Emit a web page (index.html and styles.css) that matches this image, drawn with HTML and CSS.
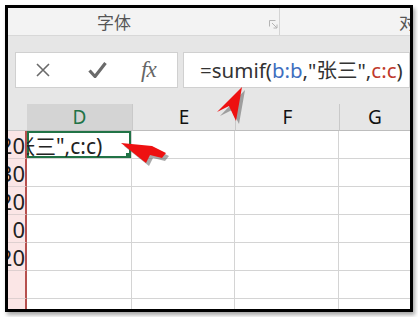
FILE: index.html
```html
<!DOCTYPE html>
<html>
<head>
  <title>sumif</title>
  <link rel="stylesheet" href="styles.css">
</head>
<body>
  <div class="frame">
    <div class="ribbon">
      <div class="group font-group">
        <span class="group-label">字体</span>
        <svg class="launcher" width="10" height="9" viewBox="0 0 10 9">
          <path d="M0.5 0.5h6M0.5 0.5v6" stroke="#b4b4b4" fill="none"/>
          <path d="M3 3l5 5M8 4.5V8H4.5" stroke="#b4b4b4" fill="none"/>
        </svg>
      </div>
      <div class="group align-group">对齐方式</div>
    </div>

    <div class="formula-area">
      <div class="fbuttons">
        <svg class="ficon" width="16" height="14" viewBox="0 0 16 14">
          <path d="M2 1l12 12M14 1L2 13" stroke="#6a6a6a" stroke-width="1.6" fill="none"/>
        </svg>
        <svg class="ficon" width="19" height="16" viewBox="0 0 19 16">
          <path d="M1.5 8.5l5.5 6L17.5 1" stroke="#6a6a6a" stroke-width="3.2" fill="none" stroke-linejoin="round"/>
        </svg>
        <span class="fx">fx</span>
      </div>
      <div class="fbox">=sumif(<span class="ref-b">b:b</span>,"张三",<span class="ref-c">c:c</span>)</div>
    </div>

    <div class="sheet">
      <div class="corner"></div>
      <div class="colhead active">D</div>
      <div class="colhead">E</div>
      <div class="colhead">F</div>
      <div class="colhead">G</div>

      <div class="rowhead"><span>120</span></div>
      <div class="cell selected"><span class="edit">张三",c:c)</span></div>
      <div class="cell"></div><div class="cell"></div><div class="cell last"></div>

      <div class="rowhead"><span>130</span></div>
      <div class="cell"></div><div class="cell"></div><div class="cell"></div><div class="cell last"></div>

      <div class="rowhead"><span>120</span></div>
      <div class="cell"></div><div class="cell"></div><div class="cell"></div><div class="cell last"></div>

      <div class="rowhead"><span>210</span></div>
      <div class="cell"></div><div class="cell"></div><div class="cell"></div><div class="cell last"></div>

      <div class="rowhead"><span>120</span></div>
      <div class="cell"></div><div class="cell"></div><div class="cell"></div><div class="cell last"></div>

      <div class="rowhead"><span></span></div>
      <div class="cell"></div><div class="cell"></div><div class="cell"></div><div class="cell last"></div>

      <div class="rowhead"><span></span></div>
      <div class="cell"></div><div class="cell"></div><div class="cell"></div><div class="cell last"></div>
    </div>

    <!-- red pointer arrows drawn over the screenshot -->
    <svg class="arrows" width="402" height="301" viewBox="8 8 402 301">
      <polygon points="245,90 220,116 232,110 239,124" fill="#555" opacity="0.5"/>
      <polygon points="242,87 217,112 229,106 236,121" fill="#ee1111"/>
      <polygon points="124,146 155,149 169,156 165,161 153,158 149,166" fill="#555" opacity="0.5"/>
      <polygon points="121,143 152,146 166,153 162,158 150,155 146,163" fill="#ee1111"/>
    </svg>
  </div>
</body>
</html>
```

FILE: styles.css
```css
body {
  margin: 0;
  background: #fff;
  font-family: "Noto Sans", "Noto Sans CJK SC", sans-serif;
}

.frame {
  position: relative;
  margin: 5px;
  width: 402px;
  height: 301px;
  border: 3px solid #000;
  overflow: hidden;
  box-shadow: 2px 3px 4px rgba(0, 0, 0, 0.35);
  background: #e6e6e6;
}

/* ribbon group labels */
.ribbon {
  display: flex;
  height: 27px;
  background: #f3f3f3;
  border-bottom: 1px solid #d8d8d8;
}
.group {
  display: flex;
  align-items: center;
  color: #555;
  font-size: 17px;
  white-space: nowrap;
}
.font-group {
  width: 279px;
  border-right: 1px solid #d4d4d4;
}
.group-label {
  margin-left: 89px;
}
.launcher {
  margin-left: 138px;
  margin-top: 5px;
}
.align-group {
  padding-left: 119px;
  overflow: hidden;
}

/* formula bar */
.formula-area {
  display: flex;
  gap: 5px;
  height: 68px;
  padding: 16px 0 0 7px;
  box-sizing: border-box;
  background: #e6e6e6;
}
.fbuttons {
  display: flex;
  align-items: center;
  width: 161px;
  height: 34px;
  background: #fff;
  border: 1px solid #d0d0d0;
}
.fbuttons .ficon:first-child {
  margin-left: 19px;
}
.fbuttons .ficon:nth-child(2) {
  margin-left: 37px;
}
.fx {
  margin-left: 34px;
  font-family: "Liberation Serif", serif;
  font-style: italic;
  font-size: 23px;
  color: #666;
  letter-spacing: -1px;
}
.fbox {
  flex: 1;
  height: 34px;
  background: #fff;
  border: 1px solid #d0d0d0;
  padding-left: 16px;
  font-size: 20.5px;
  line-height: 34px;
  color: #333;
  white-space: nowrap;
}
.ref-b { color: #3f6fc0; }
.ref-c { color: #c0392b; }

/* worksheet grid */
.sheet {
  display: grid;
  grid-template-columns: 19px 105px 103px 104px 71px;
  grid-template-rows: 27px repeat(7, 28px);
  background: #fff;
}
.corner {
  background: #e6e6e6;
  border-bottom: 1px solid #c6c6c6;
}
.colhead {
  display: flex;
  align-items: center;
  justify-content: center;
  background: #e6e6e6;
  border-left: 1px solid #c9c9c9;
  border-bottom: 1px solid #bdbdbd;
  font-size: 19px;
  color: #111;
}
.colhead.active {
  background: #d4d4d4;
  color: #217346;
  border-left: none;
}
.rowhead {
  display: flex;
  justify-content: flex-end;
  align-items: center;
  overflow: hidden;
  background: #fbe6e6;
  border-right: 2px solid #b6504e;
  border-bottom: 1px solid #ded0d0;
  padding-right: 0;
  font-size: 22px;
  color: #222;
  white-space: nowrap;
}
.cell {
  border-right: 1px solid #d4d4d4;
  border-bottom: 1px solid #d4d4d4;
}
.cell.last {
  border-right: none;
}
.cell.selected {
  position: relative;
  overflow: hidden;
  box-shadow: inset 0 0 0 2px #217346;
  display: flex;
  align-items: center;
}
.cell.selected::after {
  content: "";
  position: absolute;
  right: 0;
  bottom: 0;
  width: 5px;
  height: 5px;
  background: #217346;
}
.edit {
  margin-left: -13px;
  font-size: 21px;
  color: #222;
  white-space: nowrap;
}

.arrows {
  position: absolute;
  left: 0;
  top: 0;
}
```
